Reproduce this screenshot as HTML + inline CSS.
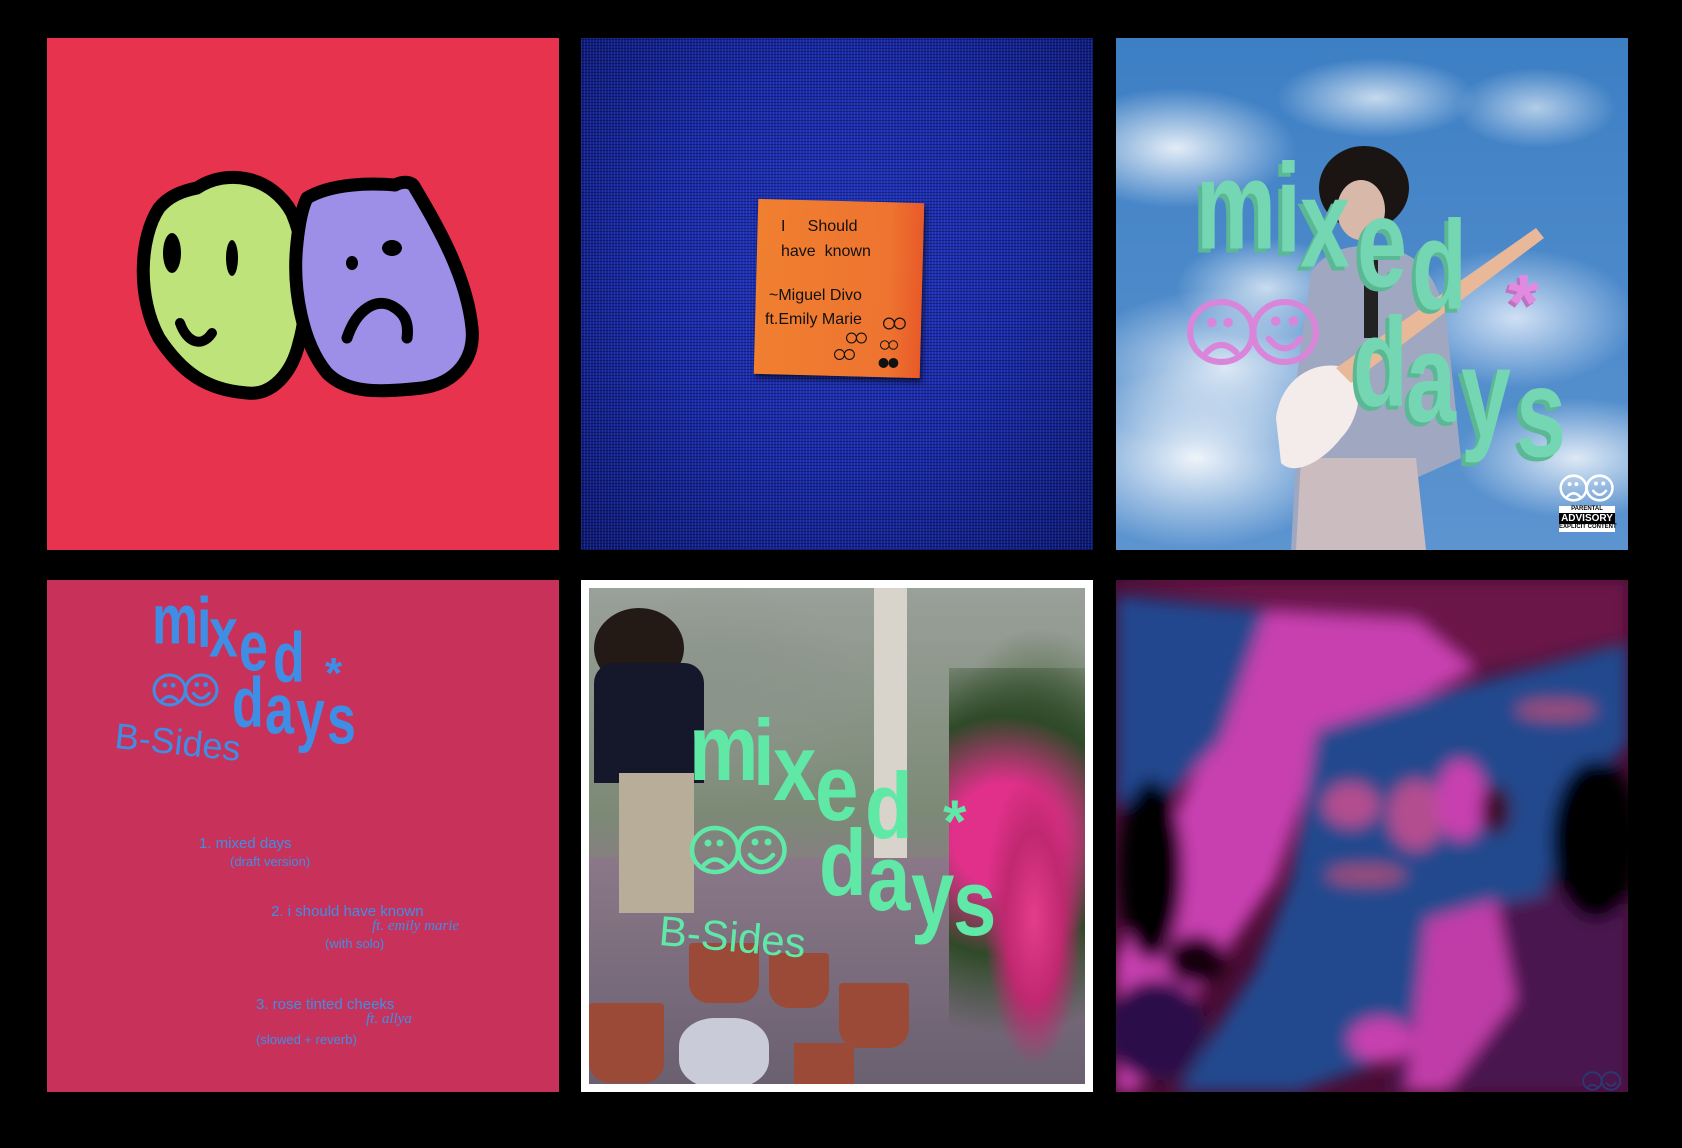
<!DOCTYPE html>
<html><head><meta charset="utf-8">
<style>
html,body{margin:0;padding:0;background:#000;width:1682px;height:1148px;overflow:hidden;font-family:"Liberation Sans",sans-serif}
.t{position:absolute;width:512px;height:512px;overflow:hidden}
.abs{position:absolute;white-space:nowrap;line-height:1}
.g3 span,.g4 span,.g5 span{position:absolute;font-weight:bold;line-height:1;transform-origin:50% 84.6%}
.g3 span{font-size:90px;color:#74d6b2;text-shadow:-4px 3px 0 #5bb894;transform:scaleY(1.4)}
.g4 span{font-size:52px;color:#3f8ee6;transform:scaleY(1.35)}
.g5 span{font-size:78px;color:#5fe8a6;transform:scaleY(1.2)}
.n{position:absolute;color:#111;font-size:16px;white-space:nowrap}
</style></head><body>

<!-- Tile 1 -->
<div class="t" style="left:47px;top:38px;background:#e8334f">
<svg width="512" height="512" viewBox="0 0 512 512">
<path d="M205 183 C235 200 248 260 245 300 C242 335 225 350 210 345 Z" fill="#e8362a"/>
<path d="M150 150 C180 130 225 138 245 175 C262 215 262 270 252 305 C245 335 225 358 200 355 C160 352 135 335 112 300 C90 260 92 200 112 170 C122 158 135 153 150 150 Z" fill="#bde37a" stroke="#000" stroke-width="13" stroke-linejoin="round"/>
<path d="M260 160 C285 145 325 145 348 147 C356 143 365 143 368 150 C392 190 420 240 425 290 C428 320 410 345 375 350 C330 355 300 355 280 335 C255 305 245 250 250 205 C252 185 255 170 260 160 Z" fill="#9d8fe8" stroke="#000" stroke-width="13" stroke-linejoin="round"/>
<ellipse cx="125" cy="215" rx="9" ry="20" fill="#000"/>
<ellipse cx="185" cy="220" rx="6" ry="18" fill="#000"/>
<path d="M133 285 C140 305 155 310 165 295" stroke="#000" stroke-width="10" fill="none" stroke-linecap="round"/>
<ellipse cx="345" cy="210" rx="10" ry="8" fill="#000"/>
<ellipse cx="305" cy="225" rx="6" ry="7" fill="#000"/>
<path d="M300 300 C310 270 330 260 345 268 C358 275 362 285 360 300" stroke="#000" stroke-width="11" fill="none" stroke-linecap="round"/>
</svg>
</div>

<!-- Tile 2 -->
<div class="t" style="left:581px;top:38px;background:radial-gradient(ellipse at 50% 45%,#2236c0 0%,#1a2aa8 50%,#0d1870 100%)">
<div style="position:absolute;inset:0;background-image:repeating-linear-gradient(0deg,rgba(0,0,0,.3) 0 1px,transparent 1px 3px),repeating-linear-gradient(90deg,rgba(90,120,255,.2) 0 1px,transparent 1px 3px)"></div>
<div style="position:absolute;left:175px;top:163px;width:166px;height:175px;background:linear-gradient(90deg,#f07f30,#ee7430 80%,#e85a28);transform:rotate(1.5deg);box-shadow:2px 4px 6px rgba(0,0,0,.6)"></div>
<div class="n" style="left:200px;top:180px">I &nbsp;&nbsp;&nbsp;&nbsp;Should</div>
<div class="n" style="left:200px;top:205px">have &nbsp;known</div>
<div class="n" style="left:188px;top:249px">~Miguel Divo</div>
<div class="n" style="left:184px;top:273px">ft.Emily Marie</div>
<svg style="position:absolute;left:302px;top:279px" width="24" height="13" viewBox="0 0 200 100"><g fill="none" stroke="#111" stroke-width="10"><ellipse cx="50" cy="50" rx="45" ry="45"/><ellipse cx="140" cy="50" rx="45" ry="45"/></g></svg>
<svg style="position:absolute;left:265px;top:294px" width="22" height="12" viewBox="0 0 200 100"><g fill="none" stroke="#111" stroke-width="10"><ellipse cx="50" cy="50" rx="45" ry="45"/><ellipse cx="140" cy="50" rx="45" ry="45"/></g></svg>
<svg style="position:absolute;left:299px;top:302px" width="19" height="10" viewBox="0 0 200 100"><g fill="none" stroke="#111" stroke-width="10"><ellipse cx="50" cy="50" rx="45" ry="45"/><ellipse cx="140" cy="50" rx="45" ry="45"/></g></svg>
<svg style="position:absolute;left:253px;top:310px" width="22" height="13" viewBox="0 0 200 100"><g fill="none" stroke="#111" stroke-width="10"><ellipse cx="50" cy="50" rx="45" ry="45"/><ellipse cx="140" cy="50" rx="45" ry="45"/></g></svg>
<svg style="position:absolute;left:297px;top:319px" width="22" height="12" viewBox="0 0 200 100"><g fill="#111"><ellipse cx="50" cy="50" rx="45" ry="45"/><ellipse cx="140" cy="50" rx="45" ry="45"/></g></svg>
</div>

<!-- Tile 3 -->
<div class="t" style="left:1116px;top:38px;background:
radial-gradient(ellipse 120px 60px at 60px 110px,rgba(255,255,255,.85),transparent),
radial-gradient(ellipse 150px 90px at 80px 420px,rgba(255,255,255,.9),transparent),
radial-gradient(ellipse 120px 70px at 400px 280px,rgba(240,245,255,.8),transparent),
radial-gradient(ellipse 100px 40px at 260px 60px,rgba(255,255,255,.7),transparent),
radial-gradient(ellipse 120px 60px at 460px 420px,rgba(255,255,255,.8),transparent),
radial-gradient(ellipse 80px 40px at 420px 70px,rgba(255,255,255,.6),transparent),
radial-gradient(ellipse 90px 50px at 150px 250px,rgba(255,255,255,.7),transparent),
radial-gradient(ellipse 150px 80px at 110px 330px,rgba(255,255,255,.8),transparent),
linear-gradient(#3d7fc4,#5c94d0)">
<svg width="512" height="512" style="position:absolute;left:0;top:0">
<ellipse cx="248" cy="150" rx="45" ry="42" fill="#1a1412"/>
<ellipse cx="245" cy="172" rx="24" ry="30" fill="#d8b8a8"/>
<path d="M195 235 C210 210 240 205 260 210 C300 210 320 235 330 280 L345 420 L300 440 L300 512 L175 512 L180 420 L170 420 Z" fill="#9fa8c0"/>
<path d="M185 420 L300 420 L310 512 L180 512 Z" fill="#cbbcc0"/>
<path d="M248 220 L262 220 L262 300 L248 300 Z" fill="#222"/>
<path d="M160 380 C165 340 200 320 230 330 C250 340 245 380 225 400 C210 420 180 440 165 425 Z" fill="#f3ecea"/>
<path d="M220 330 L420 190 L428 200 L235 345 Z" fill="#e8b898"/>
</svg>
<div class="g3">
<span style="left:80px;top:136px">m</span><span style="left:160px;top:139px">i</span><span style="left:184px;top:154px">x</span><span style="left:241px;top:174px">e</span><span style="left:296px;top:196px">d</span>
<span style="left:237px;top:293px">d</span><span style="left:290px;top:309px">a</span><span style="left:345px;top:324px">y</span><span style="left:400px;top:344px">s</span>
</div>
<div class="abs" style="left:392px;top:225px;font-size:80px;font-weight:bold;color:#e08be0;text-shadow:-3px 3px 0 #c070c0">*</div>
<svg style="position:absolute;left:70px;top:259px" width="136" height="70" viewBox="0 0 200 100"><g fill="none" stroke="#d985d9" stroke-width="9" stroke-linecap="round"><ellipse cx="52" cy="50" rx="46" ry="44"/><ellipse cx="145" cy="50" rx="46" ry="44"/><path d="M30 80 Q52 58 74 80"/><path d="M122 60 Q145 88 168 60"/></g><g fill="#d985d9"><circle cx="38" cy="36" r="7"/><circle cx="62" cy="36" r="7"/><circle cx="132" cy="34" r="7"/><circle cx="158" cy="34" r="7"/></g></svg>
<svg style="position:absolute;left:443px;top:436px" width="56" height="28" viewBox="0 0 200 100"><g fill="none" stroke="#fff" stroke-width="9" stroke-linecap="round"><ellipse cx="52" cy="50" rx="46" ry="44"/><ellipse cx="145" cy="50" rx="46" ry="44"/><path d="M30 80 Q52 58 74 80"/><path d="M122 60 Q145 88 168 60"/></g><g fill="#fff"><circle cx="38" cy="36" r="7"/><circle cx="62" cy="36" r="7"/><circle cx="132" cy="34" r="7"/><circle cx="158" cy="34" r="7"/></g></svg>
<div class="abs" style="left:443px;top:468px;width:56px;height:26px;background:#fff;color:#000;font-size:6px;text-align:center;line-height:7px;font-weight:bold">PARENTAL<br><span style="font-size:10px;line-height:11px;background:#000;color:#fff;display:block">ADVISORY</span>EXPLICIT CONTENT</div>
</div>

<!-- Tile 4 -->
<div class="t" style="left:47px;top:580px;background:#c8325a;color:#3f8ee6">
<div class="g4">
<span style="left:105px;top:21px">m</span><span style="left:150px;top:24px">i</span><span style="left:162px;top:34px">x</span><span style="left:192px;top:48px">e</span><span style="left:226px;top:59px">d</span>
<span style="left:185px;top:104px">d</span><span style="left:218px;top:111px">a</span><span style="left:249px;top:116px">y</span><span style="left:280px;top:121px">s</span>
</div>
<div class="abs" style="left:278px;top:72px;font-size:44px;font-weight:bold">*</div>
<svg style="position:absolute;left:105px;top:93px" width="68" height="34" viewBox="0 0 200 100"><g fill="none" stroke="#3f8ee6" stroke-width="9" stroke-linecap="round"><ellipse cx="52" cy="50" rx="46" ry="44"/><ellipse cx="145" cy="50" rx="46" ry="44"/><path d="M30 80 Q52 58 74 80"/><path d="M122 60 Q145 88 168 60"/></g><g fill="#3f8ee6"><circle cx="38" cy="36" r="7"/><circle cx="62" cy="36" r="7"/><circle cx="132" cy="34" r="7"/><circle cx="158" cy="34" r="7"/></g></svg>
<div class="abs" style="left:70px;top:138px;font-size:36px;transform:rotate(6deg);transform-origin:left top">B-Sides</div>
<div class="abs" style="left:152px;top:256px;font-size:15px">1. mixed days</div>
<div class="abs" style="left:183px;top:275px;font-size:13px">(draft version)</div>
<div class="abs" style="left:224px;top:324px;font-size:15px">2. i should have known</div>
<div class="abs" style="left:325px;top:339px;font-size:15px;font-style:italic;font-family:'Liberation Serif',serif">ft. emily marie</div>
<div class="abs" style="left:278px;top:357px;font-size:13px">(with solo)</div>
<div class="abs" style="left:209px;top:417px;font-size:15px">3. rose tinted cheeks</div>
<div class="abs" style="left:319px;top:432px;font-size:15px;font-style:italic;font-family:'Liberation Serif',serif">ft. allya</div>
<div class="abs" style="left:209px;top:453px;font-size:13px">(slowed + reverb)</div>
</div>

<!-- Tile 5 -->
<div class="t" style="left:581px;top:580px;background:#fff">
<div style="position:absolute;left:8px;top:8px;width:496px;height:496px;overflow:hidden;background:
radial-gradient(ellipse 110px 160px at 440px 290px,#d0307e,transparent 70%),
radial-gradient(ellipse 90px 120px at 450px 160px,#3c5a30,transparent),
radial-gradient(ellipse 150px 110px at 130px 110px,#8a948a,transparent),
linear-gradient(90deg,transparent 285px,#d8d4cc 285px,#d8d4cc 318px,transparent 318px),
linear-gradient(180deg,#9aa09a 0%,#7c8a76 45%,#8a7a86 60%,#6e6470 100%)">
<div style="position:absolute;left:0;top:270px;width:496px;height:226px;background:linear-gradient(#8a7888,#6a6070)"></div>
<div style="position:absolute;left:360px;top:80px;width:140px;height:420px;background:radial-gradient(circle at 40% 40%,#e0308a 0 20%,#2f4a28 45%,transparent 75%)"></div>
<div style="position:absolute;left:395px;top:180px;width:100px;height:300px;background:radial-gradient(ellipse at 50% 50%,#e43c8c 0,#c02870 40%,transparent 70%)"></div>
<div style="position:absolute;left:5px;top:20px;width:90px;height:80px;border-radius:50%;background:#231a16"></div>
<div style="position:absolute;left:5px;top:75px;width:110px;height:120px;background:#15182a;border-radius:20px 20px 0 0"></div>
<div style="position:absolute;left:30px;top:185px;width:75px;height:140px;background:#b8ad98"></div>
<div style="position:absolute;left:100px;top:355px;width:70px;height:60px;background:#9a4a36;border-radius:4px 4px 20px 20px"></div>
<div style="position:absolute;left:180px;top:365px;width:60px;height:55px;background:#9a4a36;border-radius:4px 4px 20px 20px"></div>
<div style="position:absolute;left:250px;top:395px;width:70px;height:65px;background:#9a4a36;border-radius:4px 4px 20px 20px"></div>
<div style="position:absolute;left:0px;top:415px;width:75px;height:80px;background:#9a4a36;border-radius:4px 4px 20px 20px"></div>
<div style="position:absolute;left:205px;top:455px;width:60px;height:45px;background:#9a4a36"></div>
<div style="position:absolute;left:90px;top:430px;width:90px;height:70px;background:#c9ccd8;border-radius:40%"></div>
</div>
<div class="g5">
<span style="left:108px;top:134px">m</span><span style="left:172px;top:139px">i</span><span style="left:192px;top:154px">x</span><span style="left:234px;top:174px">e</span><span style="left:284px;top:192px">d</span>
<span style="left:238px;top:249px">d</span><span style="left:286px;top:264px">a</span><span style="left:330px;top:279px">y</span><span style="left:372px;top:289px">s</span>
</div>
<div class="abs" style="left:362px;top:212px;font-size:60px;font-weight:bold;color:#5fe8a6">*</div>
<svg style="position:absolute;left:108px;top:245px" width="100" height="50" viewBox="0 0 200 100"><g fill="none" stroke="#5fe8a6" stroke-width="9" stroke-linecap="round"><ellipse cx="52" cy="50" rx="46" ry="44"/><ellipse cx="145" cy="50" rx="46" ry="44"/><path d="M30 80 Q52 58 74 80"/><path d="M122 60 Q145 88 168 60"/></g><g fill="#5fe8a6"><circle cx="38" cy="36" r="7"/><circle cx="62" cy="36" r="7"/><circle cx="132" cy="34" r="7"/><circle cx="158" cy="34" r="7"/></g></svg>
<div class="abs" style="left:80px;top:330px;font-size:42px;color:#5fe8a6;transform:rotate(5deg);transform-origin:left top">B-Sides</div>
</div>

<!-- Tile 6 -->
<div class="t" style="left:1116px;top:580px;background:#3a0a2a">
<svg width="512" height="512" viewBox="0 0 512 512">
<defs><filter id="b" x="-10%" y="-10%" width="120%" height="120%"><feGaussianBlur stdDeviation="8"/></filter></defs>
<rect width="512" height="512" fill="#4a0c34"/>
<g filter="url(#b)">
<path d="M300 0 L512 0 L512 70 L380 80 L330 60 Z" fill="#1a0410"/>
<path d="M0 0 L512 0 L512 60 L360 90 L300 40 L150 25 Z" fill="#6a1448"/>
<path d="M70 210 L150 30 L300 40 L360 90 L280 130 L200 180 L160 300 L90 400 L20 512 L0 512 L0 380 Z" fill="#c840b0"/>
<path d="M0 15 L150 30 L105 160 L60 210 L0 225 Z" fill="#22468e"/>
<path d="M200 150 L330 110 L512 65 L512 165 L455 215 L430 315 L330 335 L300 470 L180 512 L60 512 L140 390 L175 300 Z" fill="#22488e"/>
<path d="M330 335 L430 315 L512 280 L512 512 L270 512 L300 430 Z" fill="#4a1450"/>
<path d="M310 340 L380 320 L400 420 L330 512 L290 512 Z" fill="#c03ca8"/>
<ellipse cx="235" cy="225" rx="28" ry="22" fill="#d85090" opacity=".8"/>
<ellipse cx="300" cy="235" rx="28" ry="35" fill="#d85090" opacity=".8"/>
<ellipse cx="345" cy="220" rx="25" ry="40" fill="#c840b0"/>
<ellipse cx="250" cy="295" rx="40" ry="10" fill="#d05070" opacity=".7"/>
<ellipse cx="440" cy="130" rx="40" ry="10" fill="#d05070" opacity=".7"/>
<ellipse cx="265" cy="460" rx="32" ry="22" fill="#c840b0"/>
<ellipse cx="35" cy="290" rx="32" ry="90" fill="#050004"/>
<ellipse cx="80" cy="380" rx="30" ry="25" fill="#120010"/>
<ellipse cx="480" cy="260" rx="45" ry="80" fill="#060006"/>
<ellipse cx="380" cy="230" rx="15" ry="25" fill="#3a0828"/>
<ellipse cx="40" cy="450" rx="50" ry="50" fill="#2a1048"/>
</g>
<g fill="none" stroke="#2a3a70" stroke-width="9" stroke-linecap="round" transform="translate(466,491) scale(0.2)"><ellipse cx="52" cy="50" rx="46" ry="44"/><ellipse cx="145" cy="50" rx="46" ry="44"/><path d="M30 80 Q52 58 74 80"/><path d="M122 60 Q145 88 168 60"/></g>
</svg>
</div>

</body></html>
